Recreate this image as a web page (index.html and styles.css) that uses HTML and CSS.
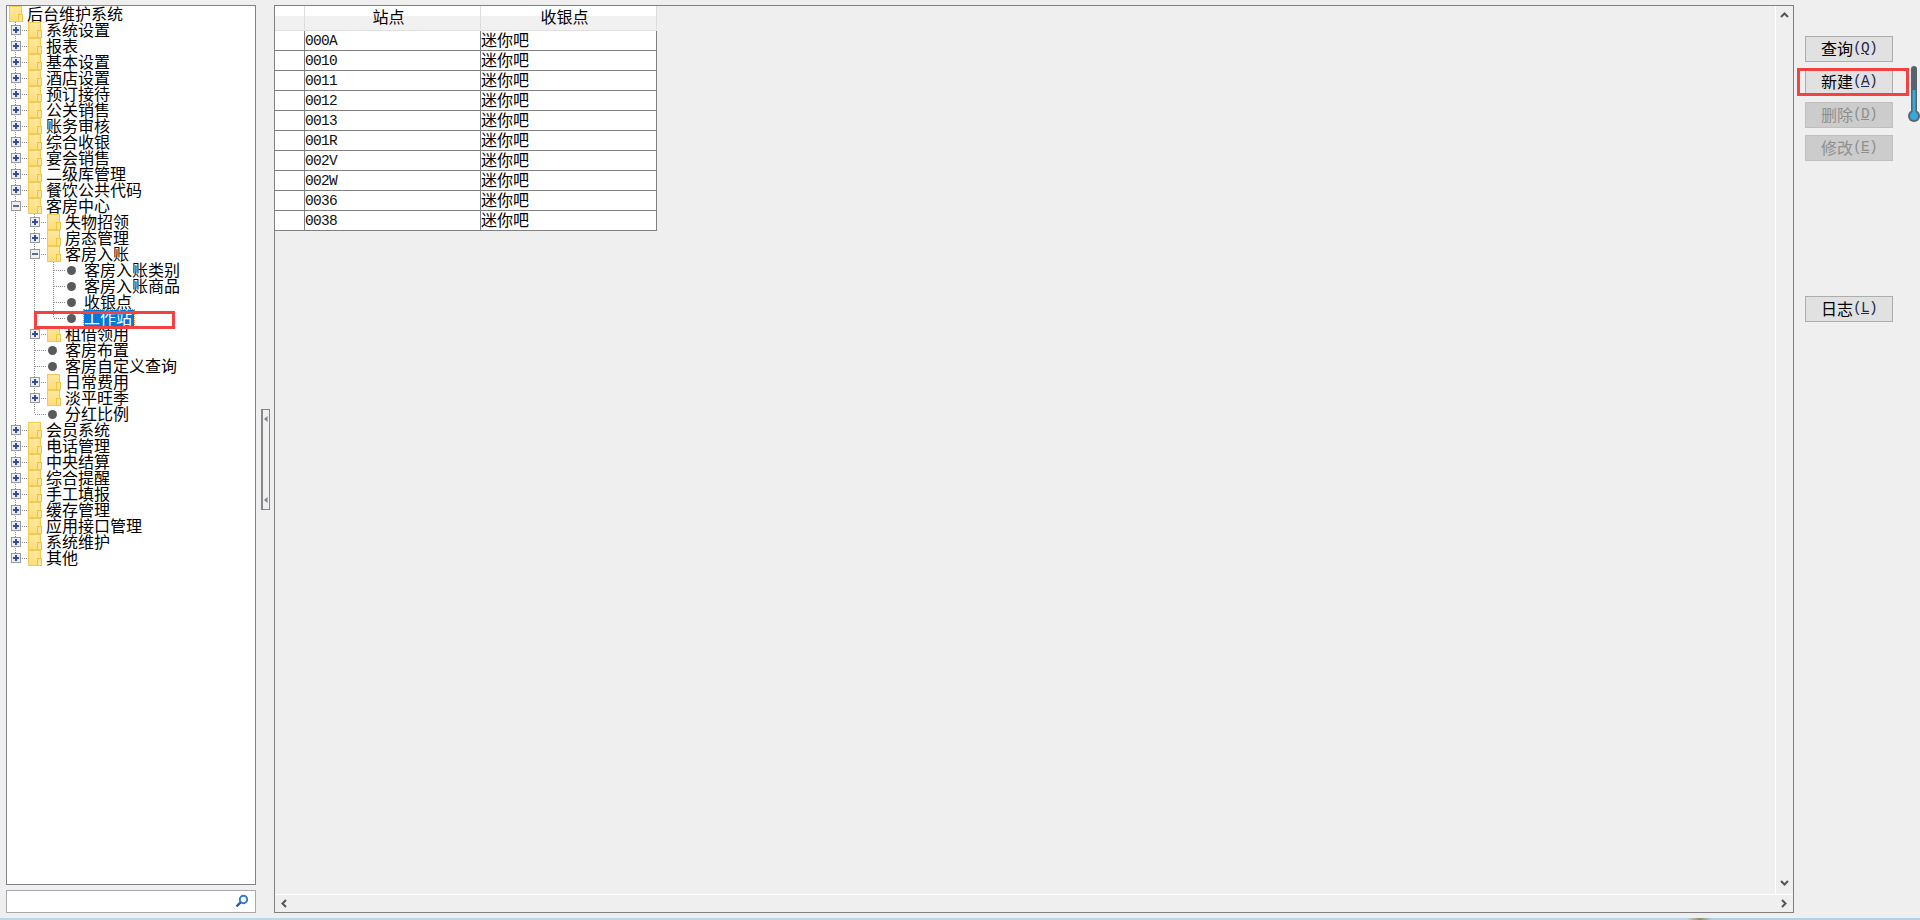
FILE: index.html
```html
<!DOCTYPE html>
<html lang="zh-CN">
<head>
<meta charset="utf-8">
<title>后台维护系统</title>
<link rel="stylesheet" href="styles.css">
</head>
<body>
<div class="page">
  <div class="main">
    <div class="left">
      <div class="tree">
        <div class="row"><div class="folder"></div><span class="label">后台维护系统</span></div>
        <div class="row"><div class="c t"><div class="pm"></div></div><div class="folder"></div><span class="label">系统设置</span></div>
        <div class="row"><div class="c t"><div class="pm"></div></div><div class="folder"></div><span class="label">报表</span></div>
        <div class="row"><div class="c t"><div class="pm"></div></div><div class="folder"></div><span class="label">基本设置</span></div>
        <div class="row"><div class="c t"><div class="pm"></div></div><div class="folder"></div><span class="label">酒店设置</span></div>
        <div class="row"><div class="c t"><div class="pm"></div></div><div class="folder"></div><span class="label">预订接待</span></div>
        <div class="row"><div class="c t"><div class="pm"></div></div><div class="folder"></div><span class="label">公关销售</span></div>
        <div class="row"><div class="c t"><div class="pm"></div></div><div class="folder"></div><span class="label">账务审核</span></div>
        <div class="row"><div class="c t"><div class="pm"></div></div><div class="folder"></div><span class="label">综合收银</span></div>
        <div class="row"><div class="c t"><div class="pm"></div></div><div class="folder"></div><span class="label">宴会销售</span></div>
        <div class="row"><div class="c t"><div class="pm"></div></div><div class="folder"></div><span class="label">二级库管理</span></div>
        <div class="row"><div class="c t"><div class="pm"></div></div><div class="folder"></div><span class="label">餐饮公共代码</span></div>
        <div class="row"><div class="c t"><div class="pm open"></div></div><div class="folder"></div><span class="label">客房中心</span></div>
        <div class="row"><div class="c v"></div><div class="c t"><div class="pm"></div></div><div class="folder"></div><span class="label">失物招领</span></div>
        <div class="row"><div class="c v"></div><div class="c t"><div class="pm"></div></div><div class="folder"></div><span class="label">房态管理</span></div>
        <div class="row"><div class="c v"></div><div class="c t"><div class="pm open"></div></div><div class="folder"></div><span class="label">客房入账</span></div>
        <div class="row"><div class="c v"></div><div class="c v"></div><div class="c t"></div><div class="dot"></div><span class="label">客房入账类别</span></div>
        <div class="row"><div class="c v"></div><div class="c v"></div><div class="c t"></div><div class="dot"></div><span class="label">客房入账商品</span></div>
        <div class="row"><div class="c v"></div><div class="c v"></div><div class="c t"></div><div class="dot"></div><span class="label">收银点</span></div>
        <div class="row"><div class="c v"></div><div class="c v"></div><div class="c e"></div><div class="dot"></div><span class="label selected">工作站</span></div>
        <div class="row"><div class="c v"></div><div class="c t"><div class="pm"></div></div><div class="folder"></div><span class="label">租借领用</span></div>
        <div class="row"><div class="c v"></div><div class="c t"></div><div class="dot"></div><span class="label">客房布置</span></div>
        <div class="row"><div class="c v"></div><div class="c t"></div><div class="dot"></div><span class="label">客房自定义查询</span></div>
        <div class="row"><div class="c v"></div><div class="c t"><div class="pm"></div></div><div class="folder"></div><span class="label">日常费用</span></div>
        <div class="row"><div class="c v"></div><div class="c t"><div class="pm"></div></div><div class="folder"></div><span class="label">淡平旺季</span></div>
        <div class="row"><div class="c v"></div><div class="c e"></div><div class="dot"></div><span class="label">分红比例</span></div>
        <div class="row"><div class="c t"><div class="pm"></div></div><div class="folder"></div><span class="label">会员系统</span></div>
        <div class="row"><div class="c t"><div class="pm"></div></div><div class="folder"></div><span class="label">电话管理</span></div>
        <div class="row"><div class="c t"><div class="pm"></div></div><div class="folder"></div><span class="label">中央结算</span></div>
        <div class="row"><div class="c t"><div class="pm"></div></div><div class="folder"></div><span class="label">综合提醒</span></div>
        <div class="row"><div class="c t"><div class="pm"></div></div><div class="folder"></div><span class="label">手工填报</span></div>
        <div class="row"><div class="c t"><div class="pm"></div></div><div class="folder"></div><span class="label">缓存管理</span></div>
        <div class="row"><div class="c t"><div class="pm"></div></div><div class="folder"></div><span class="label">应用接口管理</span></div>
        <div class="row"><div class="c t"><div class="pm"></div></div><div class="folder"></div><span class="label">系统维护</span></div>
        <div class="row"><div class="c e"><div class="pm"></div></div><div class="folder"></div><span class="label">其他</span></div>
      </div>
      <div class="search">
        <svg class="search-icon" width="14" height="14" viewBox="0 0 14 14"><circle cx="8.5" cy="5.5" r="3.7" fill="none" stroke="#3a7cc4" stroke-width="2"/><path d="M5.6 8.4 1.5 12.5" stroke="#2a5a9c" stroke-width="2.4" fill="none"/></svg>
      </div>
    </div>

    <div class="splitter">
      <div class="grip">
        <svg class="grip-arrow" width="4" height="6" viewBox="0 0 4 6"><path d="M3.5 0v6L0 3z" fill="#808088"/></svg>
        <svg class="grip-arrow" width="4" height="6" viewBox="0 0 4 6"><path d="M3.5 0v6L0 3z" fill="#808088"/></svg>
      </div>
    </div>

    <div class="panel">
      <div class="panel-top">
        <div class="sheet">
          <div class="grid-row head"><div class="cell"></div><div class="cell">站点</div><div class="cell">收银点</div></div>
          <div class="grid-row"><div class="cell"></div><div class="cell code">000A</div><div class="cell">迷你吧</div></div>
          <div class="grid-row"><div class="cell"></div><div class="cell code">0010</div><div class="cell">迷你吧</div></div>
          <div class="grid-row"><div class="cell"></div><div class="cell code">0011</div><div class="cell">迷你吧</div></div>
          <div class="grid-row"><div class="cell"></div><div class="cell code">0012</div><div class="cell">迷你吧</div></div>
          <div class="grid-row"><div class="cell"></div><div class="cell code">0013</div><div class="cell">迷你吧</div></div>
          <div class="grid-row"><div class="cell"></div><div class="cell code">001R</div><div class="cell">迷你吧</div></div>
          <div class="grid-row"><div class="cell"></div><div class="cell code">002V</div><div class="cell">迷你吧</div></div>
          <div class="grid-row"><div class="cell"></div><div class="cell code">002W</div><div class="cell">迷你吧</div></div>
          <div class="grid-row"><div class="cell"></div><div class="cell code">0036</div><div class="cell">迷你吧</div></div>
          <div class="grid-row"><div class="cell"></div><div class="cell code">0038</div><div class="cell">迷你吧</div></div>
        </div>
        <div class="vscroll">
          <svg width="9" height="6" viewBox="0 0 9 6"><path d="M1 5 4.5 1.5 8 5" fill="none" stroke="#555" stroke-width="2"/></svg>
          <svg width="9" height="6" viewBox="0 0 9 6"><path d="M1 1 4.5 4.5 8 1" fill="none" stroke="#555" stroke-width="2"/></svg>
        </div>
      </div>
      <div class="hscroll">
        <svg width="6" height="9" viewBox="0 0 6 9"><path d="M5 1 1.5 4.5 5 8" fill="none" stroke="#555" stroke-width="2"/></svg>
        <svg width="6" height="9" viewBox="0 0 6 9"><path d="M1 1 4.5 4.5 1 8" fill="none" stroke="#555" stroke-width="2"/></svg>
      </div>
    </div>

    <div class="actions">
      <div class="btn">查询<span class="key">(<u>Q</u>)</span></div>
      <div class="btn">新建<span class="key">(<u>A</u>)</span></div>
      <div class="btn off">删除<span class="key">(<u>D</u>)</span></div>
      <div class="btn off">修改<span class="key">(<u>E</u>)</span></div>
      <div class="btn log">日志<span class="key">(<u>L</u>)</span></div>
    </div>
  </div>
  <div class="band"></div>

  <div class="mark mark-tree"></div>
  <div class="mark mark-btn"></div>
  <svg class="thermo" width="12" height="57" viewBox="0 0 12 57">
    <rect x="3" y="0" width="6" height="50" rx="3" fill="#59636d"/>
    <circle cx="6" cy="50" r="6" fill="#59636d"/>
    <rect x="4.5" y="24" width="3" height="26" fill="#35a8dc"/>
    <circle cx="6" cy="50" r="4" fill="#35a8dc"/>
  </svg>
</div>
</body>
</html>
```
FILE: styles.css
```css
* { box-sizing: border-box; }
html, body { margin: 0; padding: 0; height: 100%; overflow: hidden; }
body {
  background: #efefef;
  color: #000;
  font-family: "Noto Sans CJK SC", "Liberation Sans", sans-serif;
  font-size: 16px;
  line-height: 16px;
}
.page { position: relative; width: 1920px; height: 920px; display: flex; flex-direction: column; overflow: hidden; }
.main { flex: 0 0 918px; display: flex; padding: 5px 0 5px 6px; }

/* left column */
.left { width: 250px; display: flex; flex-direction: column; gap: 5px; }
.tree { height: 880px; background: #fff; border: 1px solid #82828a; white-space: nowrap; }
.row { display: flex; height: 16px; align-items: flex-start; margin-left: -1px; }
.row:first-child .folder { margin-left: 3px; }
.label { line-height: 14px; height: 16px; }
.selected { background: #0078d7; color: #fff; padding-right: 2px; outline: 1px dotted #e08a2c; }

.c { position: relative; flex: 0 0 19px; height: 16px; }
.c.v::before, .c.t::before, .c.e::before {
  content: ""; position: absolute; left: 9px; top: 0; width: 1px; height: 16px;
  background: repeating-linear-gradient(to bottom, #8a8a8a 0 1px, transparent 1px 2px);
}
.c.e::before { height: 8px; }
.c.t::after, .c.e::after {
  content: ""; position: absolute; left: 10px; top: 8px; width: 11px; height: 1px; z-index: 1;
  background: repeating-linear-gradient(to right, #8a8a8a 0 1px, transparent 1px 2px);
}
.pm {
  position: absolute; left: 5px; top: 3px; width: 10px; height: 10px; z-index: 2;
  border: 1px solid #9a9a9a;
  background-color: #eee;
  background-image:
    linear-gradient(#2f4da6, #2f4da6),
    linear-gradient(#2f4da6, #2f4da6);
  background-size: 6px 2px, 2px 6px;
  background-position: center, center;
  background-repeat: no-repeat;
}
.pm.open { background-image: linear-gradient(#5a6a90, #5a6a90); background-size: 6px 2px; }

.folder {
  position: relative; flex: none; width: 13px; height: 16px; margin: 0 5px 0 3px;
  background: linear-gradient(to bottom, #ffe9a0, #ffdc78);
  border: 1px solid #f1cb55;
}
.folder::after {
  content: ""; position: absolute; right: -2px; bottom: -1px; width: 3px; height: 6px;
  background: #ffe490; border: 1px solid #efc648; border-left-width: 1px;
}
.dot { flex: none; width: 9px; height: 9px; margin: 4px 8px 3px 4px; border-radius: 50%; background: #5a5a5a; }

.search { position: relative; height: 23px; background: #fff; border: 1px solid #aaa; }
.search-icon { position: absolute; right: 6px; top: 3px; }

/* splitter */
.splitter { width: 18px; padding: 404px 0 0 5px; }
.grip {
  width: 9px; height: 101px; background: #efefef;
  border: 1px solid #85858c; border-left-width: 2px;
  display: flex; flex-direction: column; justify-content: space-between; padding: 6px 0 6px 1px;
}
.grip-arrow { display: block; }

/* grid panel */
.panel { width: 1520px; height: 908px; border: 1px solid #808080; display: flex; flex-direction: column; }
.panel-top { flex: 1; min-height: 0; display: flex; }
.sheet { flex: 1; }
.grid-row { display: grid; grid-template-columns: 30px 176px 176px; width: 382px; height: 20px; background: #fff; border-bottom: 1px solid #808080; }
.grid-row .cell { border-right: 1px solid #808080; line-height: 17px; white-space: nowrap; }
.grid-row.head { height: 25px; border-bottom: 1px solid #e0e0e0; background: linear-gradient(to bottom, #fff 0 40%, #f1f1f1 40% 100%); }
.grid-row.head .cell { border-right: 1px solid #dedede; text-align: center; line-height: 21px; padding-right: 8px; }
.grid-row .code { font-family: "Liberation Mono", monospace; font-size: 14.5px; letter-spacing: -0.7px; line-height: 20px; color: #111; }

.vscroll {
  flex: 0 0 18px; border-left: 1px solid #fff; display: flex; flex-direction: column;
  justify-content: space-between; align-items: center; padding: 6px 0 8px;
}
.hscroll {
  flex: 0 0 18px; border-top: 1px solid #fff; display: flex; align-items: center;
  justify-content: space-between; padding: 0 6px;
}

/* buttons */
.actions { margin-left: 11px; width: 88px; padding-top: 31px; display: flex; flex-direction: column; gap: 7px; }
.btn {
  height: 26px; background: #e1e1e1; border: 1px solid #adadad;
  display: flex; align-items: center; justify-content: center; line-height: 22px; padding-bottom: 2px;
}
.key { font-family: "Liberation Mono", monospace; font-size: 14.5px; letter-spacing: -0.7px; color: #1e2a50; }
.btn.off { background: #cccccc; border-color: #bfbfbf; color: #8f8f8f; }
.btn.off .key { color: #8f8f8f; }
.btn.log { margin-top: 128px; }

/* bottom band */
.band {
  flex: 0 0 2px;
  background: linear-gradient(to right, #bcd8e6 0 1687px, #8f8f68 1700px, #b2d2e4 1712px);
}

/* annotations on top of the screenshot */
.mark { position: absolute; border: 3px solid #f44141; z-index: 5; pointer-events: none; }
.mark-tree { left: 34px; top: 311px; width: 141px; height: 18px; }
.mark-btn { left: 1797px; top: 68px; width: 112px; height: 28px; }
.thermo { position: absolute; left: 1908px; top: 66px; z-index: 6; }
```
